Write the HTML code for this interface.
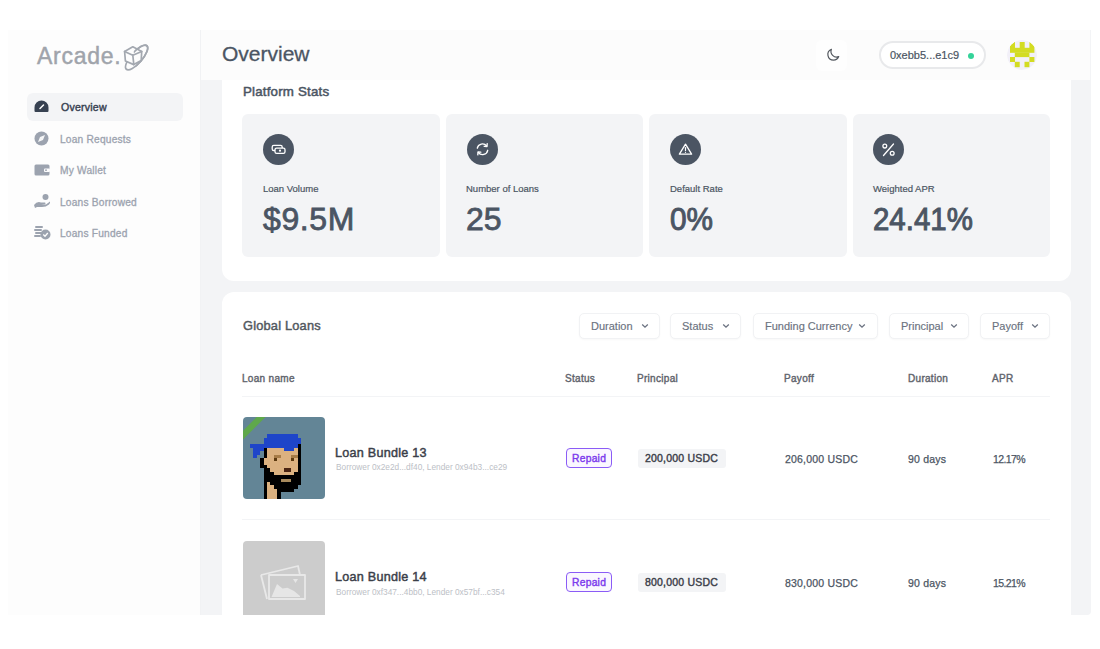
<!DOCTYPE html>
<html><head><meta charset="utf-8">
<style>
*{box-sizing:border-box;margin:0;padding:0}
html,body{width:1100px;height:649px;overflow:hidden;background:#fff;font-family:"Liberation Sans",sans-serif;position:relative}
.a{position:absolute;white-space:nowrap;line-height:20px;height:20px}
#sidebar{position:absolute;left:8px;top:30px;width:193px;height:585px;background:#fdfdfd;border-right:1px solid #f1f2f4}
#main{position:absolute;left:201px;top:30px;width:890px;border-bottom-right-radius:4px;height:585px;background:#f3f4f6;overflow:hidden}
#header{position:absolute;left:201px;top:30px;width:889px;height:50px;background:#fcfcfc}
.card{position:absolute;background:#fff;border-radius:12px}
.stat{position:absolute;top:114px;width:197.5px;height:143px;background:#f3f4f6;border-radius:6px}
.circ{position:absolute;top:134px;width:31px;height:31px;border-radius:50%;background:#4b5563}
.lbl{font-size:9.5px;color:#4b5563;-webkit-text-stroke:0.2px #4b5563}
.val{font-size:32px;color:#4b5563;-webkit-text-stroke:0.8px #4b5563}
.nav{font-size:10.2px;letter-spacing:0.2px;color:#9ca3af;-webkit-text-stroke:0.3px #9ca3af}
.flt{position:absolute;top:313px;height:26px;border:1px solid #f1f2f4;border-radius:5px;background:#fff;box-shadow:0 1px 2px rgba(0,0,0,0.03)}
.flt span{position:absolute;left:11px;top:2px;font-size:11px;line-height:20px;color:#6b7280;-webkit-text-stroke:0.15px #6b7280}
.flt svg{position:absolute;top:9px}
.th{font-size:10px;letter-spacing:0.3px;color:#5f646c;-webkit-text-stroke:0.4px #5f646c}
.td{font-size:10.5px;letter-spacing:0.2px;color:#4b5563;-webkit-text-stroke:0.25px #4b5563}
.badge{position:absolute;width:46px;height:20px;border:1.5px solid #8b5cf6;border-radius:4px;background:#faf7ff}
.badge span{position:absolute;left:5px;top:-0.5px;font-size:10.3px;letter-spacing:0.25px;color:#7c3aed;-webkit-text-stroke:0.4px #7c3aed;line-height:20px}
.pill{position:absolute;width:88px;height:19px;background:#f3f4f6;border-radius:3px}
.pill span{position:absolute;left:7px;top:0px;font-size:10.5px;letter-spacing:0.2px;color:#3b4049;-webkit-text-stroke:0.4px #3b4049;line-height:19px}
</style></head><body>
<domain style="display:none">Computer-Use</domain>
<div id="sidebar"></div>
<div id="main">
</div>
<!-- cards (absolute in body coords) -->
<div class="card" style="left:222px;top:50px;width:849px;height:231px"></div>
<div class="card" style="left:222px;top:292px;width:849px;height:400px"></div>
<div id="header"></div>

<!-- logo -->
<div class="a" style="left:37px;top:45.5px;font-size:23px;color:#a0a4ab;letter-spacing:0.75px;-webkit-text-stroke:0.45px #a0a4ab">Arcade.</div>
<svg style="position:absolute;left:116px;top:40px" width="36" height="34" viewBox="0 0 36 34">
 <defs><clipPath id="lgfront"><polygon points="-20,60 60,-30 60,60"/></clipPath></defs>
 <g fill="none" stroke="#a3a8b0" stroke-width="1.7" stroke-linejoin="round" stroke-linecap="round">
  <ellipse cx="20.6" cy="17.5" rx="15.6" ry="5.6" transform="rotate(-48.8 20.6 17.5)"/>
  <path d="M16.8 6.8 L25.7 11.5 L25.2 20.4 L17.8 24.6 L9.4 21 L8.6 11.5 Z" fill="#fdfdfd"/>
  <path d="M8.6 11.5 L16.8 15.2 L25.7 11.5 M16.8 15.2 L17.8 24.6"/>
  <ellipse cx="20.6" cy="17.5" rx="15.6" ry="5.6" transform="rotate(-48.8 20.6 17.5)" clip-path="url(#lgfront)"/>
 </g>
</svg>

<!-- nav -->
<div style="position:absolute;left:27px;top:93px;width:156px;height:28px;background:#f3f4f6;border-radius:6px"></div>
<svg style="position:absolute;left:34px;top:100px" width="15" height="13" viewBox="0 0 15 13">
 <path d="M7.5 0.5 A7 7 0 0 0 0.5 7.5 L0.5 11 Q0.5 12 1.5 12 L13.5 12 Q14.5 12 14.5 11 L14.5 7.5 A7 7 0 0 0 7.5 0.5 Z" fill="#374151"/>
 <path d="M6 8.5 L9.5 5" stroke="#fff" stroke-width="1.5" stroke-linecap="round"/>
</svg>
<div class="a nav" style="left:61px;top:97px;font-size:10.6px;letter-spacing:0.2px;color:#374151;-webkit-text-stroke:0.4px #374151">Overview</div>
<svg style="position:absolute;left:34px;top:131px" width="15" height="15" viewBox="0 0 15 15">
 <circle cx="7.5" cy="7.5" r="7" fill="#9ca3af"/>
 <path d="M4 11 L6 6 L11 4 L9 9 Z" fill="#fff" opacity="0.9"/>
</svg>
<div class="a nav" style="left:60px;top:130px">Loan Requests</div>
<svg style="position:absolute;left:34px;top:164px" width="16" height="12" viewBox="0 0 16 12">
 <rect x="0.5" y="0.5" width="15" height="11" rx="1.5" fill="#9ca3af"/>
 <rect x="10" y="4.5" width="6" height="3.5" rx="1" fill="#fcfcfd"/>
 <circle cx="12" cy="6.2" r="0.9" fill="#9ca3af"/>
</svg>
<div class="a nav" style="left:60px;top:161px">My Wallet</div>
<svg style="position:absolute;left:33px;top:193px" width="18" height="16" viewBox="0 0 18 16">
 <circle cx="12.5" cy="4" r="3" fill="#9ca3af"/>
 <path d="M1 12 Q4 8 8 9.5 L12 9.5 Q13.5 10 12 11 L8 11 L13 11.5 L17 8.5 Q17.5 10 16 11.5 Q13 14 9 14 L4 14 L2 15 Z" fill="#9ca3af"/>
</svg>
<div class="a nav" style="left:60px;top:193px">Loans Borrowed</div>
<svg style="position:absolute;left:34px;top:225px" width="17" height="15" viewBox="0 0 17 15">
 <g fill="#9ca3af">
 <rect x="1" y="1" width="8" height="2" rx="1"/>
 <rect x="0" y="4" width="8" height="2" rx="1"/>
 <rect x="1" y="7" width="7" height="2" rx="1"/>
 <rect x="0" y="10" width="7" height="2" rx="1"/>
 <circle cx="11.5" cy="9.5" r="5"/>
 </g>
 <path d="M9.3 9.5 L11 11.2 L13.8 8" stroke="#fff" stroke-width="1.3" fill="none"/>
</svg>
<div class="a nav" style="left:60px;top:224px">Loans Funded</div>

<!-- header -->
<div class="a" style="left:222px;top:44px;font-size:21px;color:#4b5563;-webkit-text-stroke:0.3px #4b5563">Overview</div>
<div style="position:absolute;left:816px;top:40px;width:31px;height:31px;background:#fefefe;border-radius:6px"></div>
<svg style="position:absolute;left:825.5px;top:47px" width="15" height="15" viewBox="0 0 24 24">
 <path d="M20.354 15.354A9 9 0 018.646 3.646 9.003 9.003 0 0012 21a9.003 9.003 0 008.354-5.646z" fill="none" stroke="#52575e" stroke-width="1.9" stroke-linejoin="round" stroke-linecap="round"/>
</svg>
<div style="position:absolute;left:879px;top:41px;width:107px;height:28px;border:2px solid #e8e9eb;border-radius:14px;background:#fff"></div>
<div class="a" style="left:890px;top:45px;font-size:11px;color:#4b5563;-webkit-text-stroke:0.2px #4b5563">0xebb5...e1c9</div>
<div style="position:absolute;left:968px;top:53px;width:6px;height:6px;border-radius:50%;background:#34d399"></div>
<svg style="position:absolute;left:1007px;top:40px;border-radius:50%" width="30" height="30" viewBox="0 0 30 30"><defs><clipPath id="avc"><circle cx="15" cy="15" r="15"/></clipPath></defs>
 <circle cx="15" cy="15" r="15" fill="#f2f0f8"/>
 <g fill="#d3dc22" clip-path="url(#avc)">
  <rect x="3" y="2" width="5" height="6"/><rect x="12.7" y="2" width="5" height="6"/><rect x="22.4" y="2" width="5" height="6"/>
  <rect x="3" y="7.8" width="24.4" height="5"/>
  <rect x="7.8" y="12.6" width="14.6" height="4.5"/>
  <rect x="3" y="17" width="5" height="5"/><rect x="22.4" y="17" width="5" height="5"/>
  <rect x="7.8" y="21.8" width="4.9" height="5.4"/><rect x="17.5" y="21.8" width="4.9" height="5.4"/>
 </g>
</svg>

<!-- platform stats -->
<div class="a" style="left:243px;top:82px;font-size:13.3px;letter-spacing:0.2px;color:#4b5563;-webkit-text-stroke:0.5px #4b5563">Platform Stats</div>
<div class="stat" style="left:242px"></div>
<div class="stat" style="left:445.5px"></div>
<div class="stat" style="left:649px"></div>
<div class="stat" style="left:852.5px"></div>

<div class="circ" style="left:263px"></div>
<svg style="position:absolute;left:263px;top:134px" width="31" height="31" viewBox="0 0 31 31">
 <rect x="9.2" y="11.3" width="10" height="5.2" rx="1.6" fill="none" stroke="#fff" stroke-width="1.3"/>
 <rect x="12" y="14.1" width="10" height="5.2" rx="1.6" fill="#4b5563" stroke="#fff" stroke-width="1.3"/>
 <circle cx="17" cy="16.7" r="1.1" fill="#fff"/>
</svg>
<div class="circ" style="left:466.5px"></div>
<svg style="position:absolute;left:466.5px;top:134px" width="31" height="31" viewBox="0 0 31 31">
 <g fill="none" stroke="#fff" stroke-width="1.35" stroke-linecap="round" stroke-linejoin="round">
 <path d="M10.3 14.2 A5.2 5.2 0 0 1 19.6 12"/><path d="M20.2 9.6 L20 12.5 L17.2 12.3"/>
 <path d="M20.7 16.3 A5.2 5.2 0 0 1 11.4 18.5"/><path d="M10.8 20.9 L11 18 L13.8 18.2"/>
 </g>
</svg>
<div class="circ" style="left:670px"></div>
<svg style="position:absolute;left:670px;top:134px" width="31" height="31" viewBox="0 0 31 31">
 <path d="M15.5 10.2 L21.6 20.2 L9.4 20.2 Z" fill="none" stroke="#fff" stroke-width="1.3" stroke-linejoin="round"/>
 <path d="M15.5 13.6 L15.5 16.6" stroke="#fff" stroke-width="1.2" stroke-linecap="round"/>
 <circle cx="15.5" cy="18.3" r="0.65" fill="#fff"/>
</svg>
<div class="circ" style="left:873px"></div>
<svg style="position:absolute;left:873px;top:134px" width="31" height="31" viewBox="0 0 31 31">
 <g fill="none" stroke="#fff" stroke-width="1.3">
 <circle cx="11.8" cy="12.1" r="1.9"/><circle cx="19.2" cy="19.3" r="1.9"/>
 </g>
 <path d="M20.5 10 L10.5 21.5" stroke="#fff" stroke-width="1.3" stroke-linecap="round"/>
</svg>

<div class="a lbl" style="left:263px;top:179px">Loan Volume</div>
<div class="a val" style="left:263px;top:209px;letter-spacing:0.6px">$9.5M</div>
<div class="a lbl" style="left:466px;top:179px">Number of Loans</div>
<div class="a val" style="left:466px;top:209px">25</div>
<div class="a lbl" style="left:670px;top:179px">Default Rate</div>
<div class="a val" style="left:670px;top:209px;transform:scaleX(0.93);transform-origin:0 0;-webkit-text-stroke:1px #4b5563">0%</div>
<div class="a lbl" style="left:873px;top:179px">Weighted APR</div>
<div class="a val" style="left:873px;top:209px;transform:scaleX(0.92);transform-origin:0 0;-webkit-text-stroke:1px #4b5563">24.41%</div>

<!-- global loans -->
<div class="a" style="left:243px;top:316px;font-size:12.8px;letter-spacing:0.2px;color:#525860;-webkit-text-stroke:0.45px #525860">Global Loans</div>
<div class="flt" style="left:579px;width:81px"><span>Duration</span><svg style="left:61px" width="8" height="6" viewBox="0 0 8 6"><path d="M1.2 1.5 L4 4.2 L6.8 1.5" fill="none" stroke="#6b7280" stroke-width="1.3"/></svg></div>
<div class="flt" style="left:670px;width:71px"><span>Status</span><svg style="left:51px" width="8" height="6" viewBox="0 0 8 6"><path d="M1.2 1.5 L4 4.2 L6.8 1.5" fill="none" stroke="#6b7280" stroke-width="1.3"/></svg></div>
<div class="flt" style="left:753px;width:125px"><span>Funding Currency</span><svg style="left:104px" width="8" height="6" viewBox="0 0 8 6"><path d="M1.2 1.5 L4 4.2 L6.8 1.5" fill="none" stroke="#6b7280" stroke-width="1.3"/></svg></div>
<div class="flt" style="left:889px;width:80px"><span>Principal</span><svg style="left:60px" width="8" height="6" viewBox="0 0 8 6"><path d="M1.2 1.5 L4 4.2 L6.8 1.5" fill="none" stroke="#6b7280" stroke-width="1.3"/></svg></div>
<div class="flt" style="left:980px;width:70px"><span>Payoff</span><svg style="left:50px" width="8" height="6" viewBox="0 0 8 6"><path d="M1.2 1.5 L4 4.2 L6.8 1.5" fill="none" stroke="#6b7280" stroke-width="1.3"/></svg></div>

<div class="a th" style="left:242px;top:369px">Loan name</div>
<div class="a th" style="left:565px;top:369px">Status</div>
<div class="a th" style="left:637px;top:369px">Principal</div>
<div class="a th" style="left:784px;top:369px">Payoff</div>
<div class="a th" style="left:908px;top:369px">Duration</div>
<div class="a th" style="left:992px;top:369px">APR</div>
<div style="position:absolute;left:242px;top:396px;width:808px;height:1px;background:#f3f4f6"></div>

<!-- row 1 -->
<svg style="position:absolute;left:243px;top:417px;border-radius:4px" width="82" height="82" viewBox="0 0 24 24" shape-rendering="crispEdges">
 <rect width="24" height="24" fill="#638596"/>
 <rect x="7" y="5" width="9" height="1" fill="#1e45c9"/><rect x="6" y="6" width="11" height="1" fill="#1e45c9"/><rect x="6" y="7" width="11" height="1" fill="#1e45c9"/><rect x="2" y="8" width="14" height="1" fill="#1e45c9"/><rect x="16" y="8" width="1" height="1" fill="#000000"/><rect x="3" y="9" width="3" height="1" fill="#1e45c9"/><rect x="6" y="9" width="1" height="1" fill="#000000"/><rect x="7" y="9" width="5" height="1" fill="#dbb180"/><rect x="12" y="9" width="3" height="1" fill="#1e45c9"/><rect x="15" y="9" width="1" height="1" fill="#dbb180"/><rect x="16" y="9" width="1" height="1" fill="#000000"/><rect x="3" y="10" width="2" height="1" fill="#1e45c9"/><rect x="6" y="10" width="1" height="1" fill="#000000"/><rect x="7" y="10" width="9" height="1" fill="#dbb180"/><rect x="16" y="10" width="1" height="1" fill="#000000"/><rect x="3" y="11" width="1" height="1" fill="#1e45c9"/><rect x="6" y="11" width="1" height="1" fill="#000000"/><rect x="7" y="11" width="2" height="1" fill="#dbb180"/><rect x="9" y="11" width="2" height="1" fill="#a77c47"/><rect x="11" y="11" width="3" height="1" fill="#dbb180"/><rect x="14" y="11" width="2" height="1" fill="#a77c47"/><rect x="16" y="11" width="1" height="1" fill="#000000"/><rect x="5" y="12" width="1" height="1" fill="#000000"/><rect x="6" y="12" width="3" height="1" fill="#dbb180"/><rect x="9" y="12" width="1" height="1" fill="#5c390f"/><rect x="10" y="12" width="4" height="1" fill="#dbb180"/><rect x="14" y="12" width="1" height="1" fill="#5c390f"/><rect x="15" y="12" width="1" height="1" fill="#dbb180"/><rect x="16" y="12" width="1" height="1" fill="#000000"/><rect x="5" y="13" width="1" height="1" fill="#000000"/><rect x="6" y="13" width="10" height="1" fill="#dbb180"/><rect x="16" y="13" width="1" height="1" fill="#000000"/><rect x="5" y="14" width="2" height="1" fill="#000000"/><rect x="7" y="14" width="9" height="1" fill="#dbb180"/><rect x="16" y="14" width="1" height="1" fill="#000000"/><rect x="6" y="15" width="2" height="1" fill="#000000"/><rect x="8" y="15" width="4" height="1" fill="#dbb180"/><rect x="12" y="15" width="2" height="1" fill="#4a2412"/><rect x="14" y="15" width="2" height="1" fill="#dbb180"/><rect x="16" y="15" width="1" height="1" fill="#000000"/><rect x="6" y="16" width="3" height="1" fill="#000000"/><rect x="9" y="16" width="6" height="1" fill="#dbb180"/><rect x="15" y="16" width="2" height="1" fill="#000000"/><rect x="6" y="17" width="11" height="1" fill="#000000"/><rect x="6" y="18" width="5" height="1" fill="#000000"/><rect x="11" y="18" width="3" height="1" fill="#a88a5c"/><rect x="14" y="18" width="3" height="1" fill="#000000"/><rect x="6" y="19" width="1" height="1" fill="#000000"/><rect x="7" y="19" width="1" height="1" fill="#dbb180"/><rect x="8" y="19" width="9" height="1" fill="#000000"/><rect x="6" y="20" width="1" height="1" fill="#000000"/><rect x="7" y="20" width="2" height="1" fill="#dbb180"/><rect x="9" y="20" width="7" height="1" fill="#000000"/><rect x="6" y="21" width="1" height="1" fill="#000000"/><rect x="7" y="21" width="3" height="1" fill="#dbb180"/><rect x="10" y="21" width="5" height="1" fill="#000000"/><rect x="6" y="22" width="1" height="1" fill="#000000"/><rect x="7" y="22" width="3" height="1" fill="#dbb180"/><rect x="10" y="22" width="1" height="1" fill="#000000"/><rect x="6" y="23" width="1" height="1" fill="#000000"/><rect x="7" y="23" width="3" height="1" fill="#dbb180"/><rect x="10" y="23" width="1" height="1" fill="#000000"/>
 <polygon points="0,4 4,0 6.6,0 0,6.6" fill="#5fa84b" shape-rendering="geometricPrecision"/>
</svg>
<div class="a" style="left:335px;top:443px;font-size:12.6px;letter-spacing:0.25px;color:#3b4049;-webkit-text-stroke:0.45px #3b4049">Loan Bundle 13</div>
<div class="a" style="left:336px;top:457px;font-size:8.3px;color:#bcc0c6">Borrower 0x2e2d...df40, Lender 0x94b3...ce29</div>
<div class="badge" style="left:566px;top:448px"><span>Repaid</span></div>
<div class="pill" style="left:638px;top:449px"><span>200,000 USDC</span></div>
<div class="a td" style="left:785px;top:449px">206,000 USDC</div>
<div class="a td" style="left:908px;top:449px">90 days</div>
<div class="a td" style="left:993px;top:449px;letter-spacing:-0.6px">12.17%</div>
<div style="position:absolute;left:242px;top:519px;width:808px;height:1px;background:#f3f4f6"></div>

<!-- row 2 -->
<div style="position:absolute;left:243px;top:541px;width:82px;height:82px;background:#cccccc;border-radius:4px"></div>
<svg style="position:absolute;left:243px;top:541px" width="82" height="82" viewBox="0 0 82 82">
 <g fill="none" stroke="#e8e8e8" stroke-width="1.8" stroke-linejoin="round">
  <path d="M18 34 L55 25 L57 34"/>
  <path d="M18 34 L24 58"/>
  <rect x="26" y="34" width="36" height="24"/>
 </g>
 <path d="M28.5 56 L34 43 L39.5 47.5 L44.5 46.7 L51 50 L57 55 L57 56 Z" fill="#e6e6e6"/>
 <path d="M50 38 L55 38 L52.5 42 Z" fill="#e6e6e6"/>
</svg>
<div class="a" style="left:335px;top:567px;font-size:12.6px;letter-spacing:0.25px;color:#3b4049;-webkit-text-stroke:0.45px #3b4049">Loan Bundle 14</div>
<div class="a" style="left:336px;top:582px;font-size:8.3px;color:#bcc0c6">Borrower 0xf347...4bb0, Lender 0x57bf...c354</div>
<div class="badge" style="left:566px;top:572px"><span>Repaid</span></div>
<div class="pill" style="left:638px;top:573px"><span>800,000 USDC</span></div>
<div class="a td" style="left:785px;top:573px">830,000 USDC</div>
<div class="a td" style="left:908px;top:573px">90 days</div>
<div class="a td" style="left:993px;top:573px;letter-spacing:-0.6px">15.21%</div>

<!-- bottom white cover -->
<div style="position:absolute;left:0;top:615px;width:1100px;height:34px;background:#fff"></div>
</body></html>
